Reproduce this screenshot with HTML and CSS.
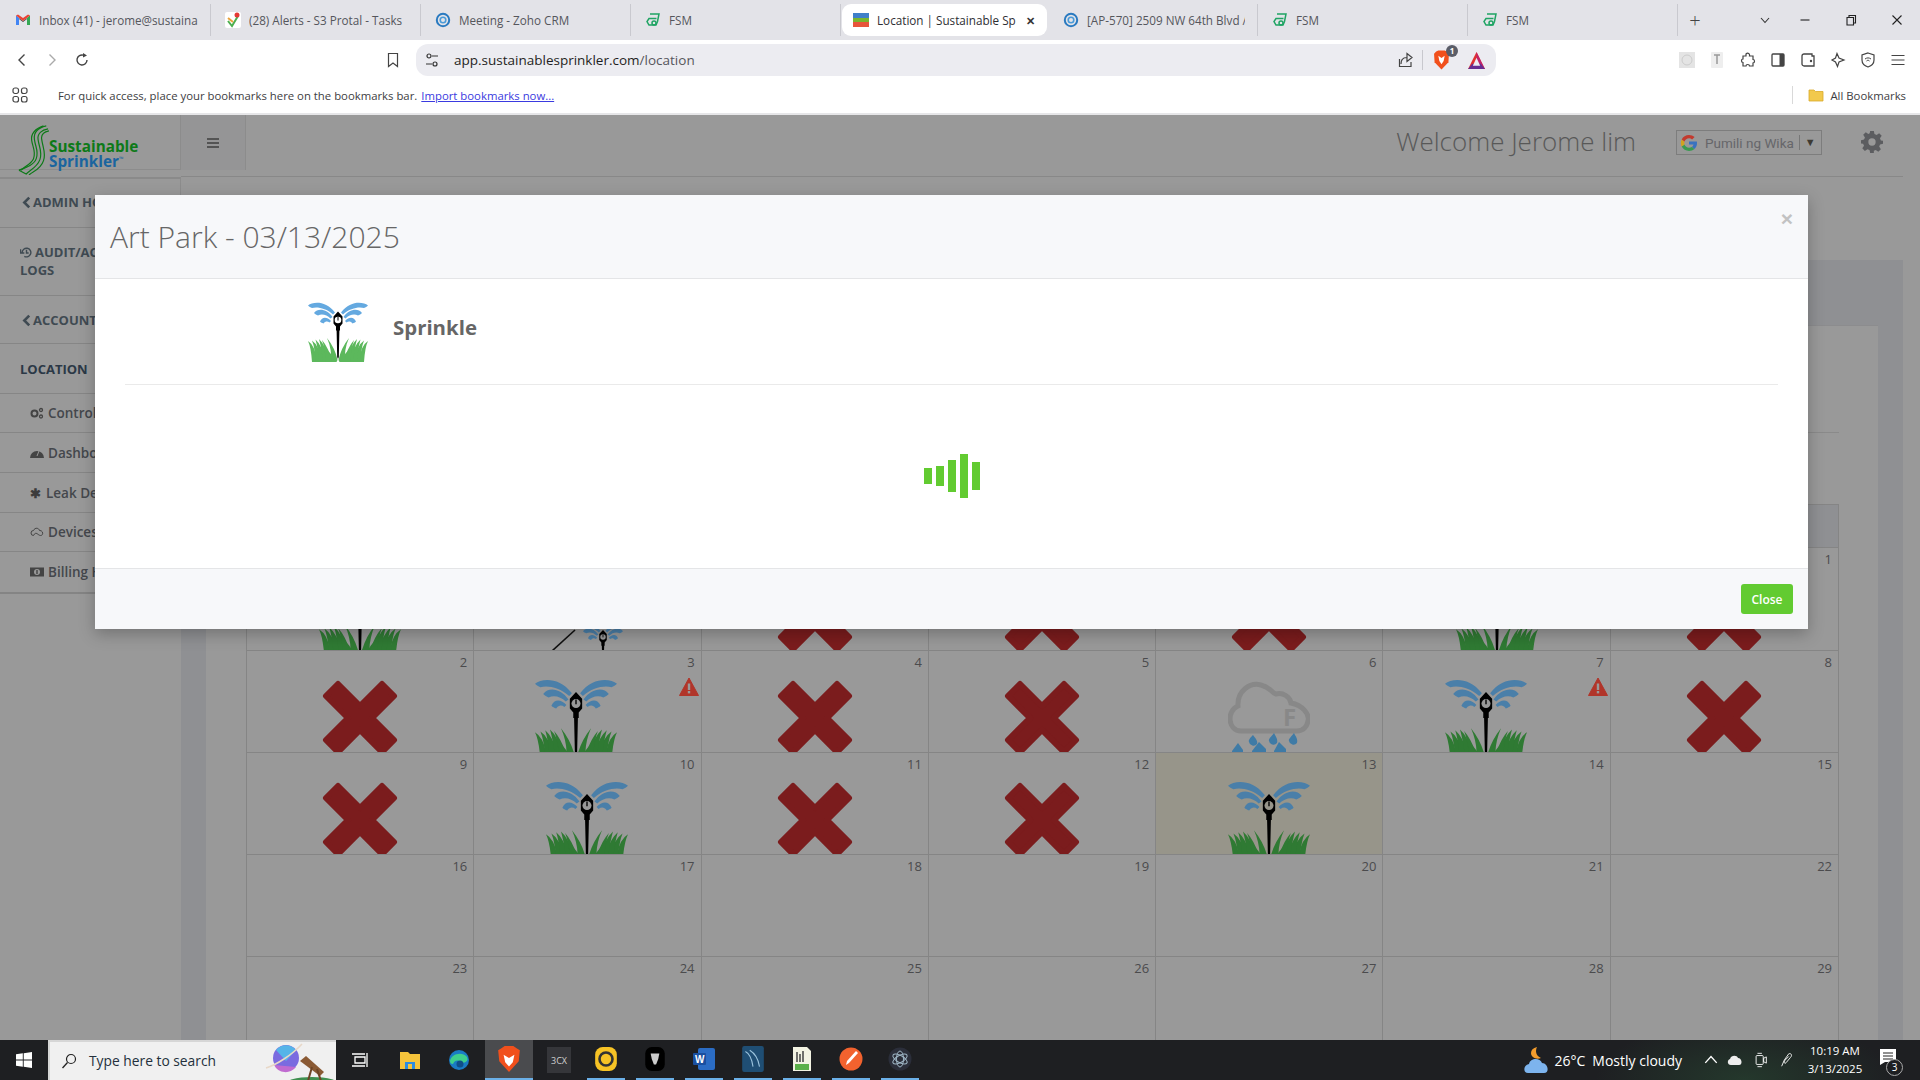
FILE: index.html
```html
<!DOCTYPE html>
<html lang="en">
<head>
<meta charset="utf-8">
<title>Location | Sustainable Sprinkler</title>
<link rel="stylesheet" href="styles.css">
</head>
<body>
<svg class="defs" width="0" height="0" aria-hidden="true">
  <symbol id="spr" viewBox="0 0 60 60">
    <g id="spr-half">
      <g class="spr-water">
        <path d="M0 3.500C5-.5 18-1.500 27 10.500L25 12.500C18 6 9 4.500 4 6C2.500 5.500 1 4.500 0 3.500Z"/>
        <path d="M6 11C10 5.500 19 7 24.500 15L22.500 16.500C19 13 14 11.500 10 13.500C8.500 13 7 12 6 11Z"/>
        <path d="M12 19.500C14 14.500 19 14.500 23 19L21.500 20.500C19.500 19 17.500 19 15.500 21.500C14 21 13 20.500 12 19.500Z"/>
      </g>
      <g class="spr-grass">
        <path d="M5 60Q6 50 12 46Q22 46 27 60Z"/>
        <path d="M4 60Q3 45 0 39Q8 44 8.500 60Z"/>
        <path d="M7.500 60Q7 46 4 38.500Q12 44 13 60Z"/>
        <path d="M11 60Q10 46 7.500 37.500Q15 44 17 60Z"/>
        <path d="M15 60Q13.500 46 11 37Q18.500 44 21 60Z"/>
        <path d="M18 60Q17 46 14 38Q21 46 24 60Z"/>
        <path d="M23 60Q24 47 19 36Q27 46 29.500 58L28.500 60Z"/>
      </g>
    </g>
    <use href="#spr-half" transform="matrix(-1 0 0 1 60 0)"/>
    <path d="M30 9.500L34.500 14.500V21.500L32 24.500V28.500H31.400L30.800 55L30 57L29.200 55L28.600 28.500H28V24.500L25.500 21.500V14.500Z" fill="#000"/>
    <circle cx="30" cy="18" r="3.300" fill="var(--spr-eye)"/>
    <path d="M30 15V18.500" stroke="#000" stroke-width="1"/>
  </symbol>
  <symbol id="xmark" viewBox="0 0 82 82">
    <path d="M7 17L19 5L41 27L63 5L75 17L53 39L75 61L63 73L41 51L19 73L7 61L29 39Z" fill="#7b1c1d" stroke="#7b1c1d" stroke-width="6" stroke-linejoin="round"/>
  </symbol>
  <symbol id="warn" viewBox="0 0 20 20">
    <path d="M10 1L19.500 18.500H0.500Z" fill="#b1352a" stroke="#b1352a" stroke-linejoin="round"/>
    <rect x="8.800" y="6.500" width="2.400" height="6.500" fill="#999"/>
    <rect x="8.800" y="14" width="2.400" height="2.400" fill="#999"/>
  </symbol>
  <symbol id="fsm" viewBox="0 0 16 16">
    <path d="M5 2H14L12.500 9.500L11 13H4L2 9.500L4 6.500H11.500" fill="none" stroke="#1fa463" stroke-width="1.500"/>
    <circle cx="9" cy="11" r="2" fill="none" stroke="#1fa463" stroke-width="1.500"/>
  </symbol>
  <symbol id="zoho" viewBox="0 0 16 16">
    <circle cx="8" cy="8" r="6.200" fill="none" stroke="#2a7ac0" stroke-width="2"/>
    <circle cx="8" cy="8" r="2.800" fill="none" stroke="#4a9bd8" stroke-width="1.600"/>
  </symbol>
</svg>

<header class="tabstrip">
  <div class="tab first"><svg class="fav" viewBox="0 0 16 16"><path d="M1 13V4L8 9L15 4V13H12V7L8 10L4 7V13Z" fill="#444"/><path d="M1 13V3.500L4 6V13Z" fill="#4285f4"/><path d="M15 13V3.500L12 6V13Z" fill="#34a853"/><path d="M1 3.500L8 9L15 3.500L13 2.500L8 6L3 2.500Z" fill="#ea4335"/></svg><span class="tab-title">Inbox (41) - jerome@sustainab</span></div>
  <div class="tab"><svg class="fav" viewBox="0 0 16 16"><rect width="16" height="16" rx="2" fill="#fff"/><path d="M3 9L7 14L13 4" fill="none" stroke="#4caf50" stroke-width="2"/><path d="M3 6L8 10" stroke="#e9a13b" stroke-width="2"/><circle cx="12" cy="3" r="2.500" fill="#e53935"/></svg><span class="tab-title">(28) Alerts - S3 Protal - Tasks</span></div>
  <div class="tab"><svg class="fav"><use href="#zoho"/></svg><span class="tab-title">Meeting - Zoho CRM</span></div>
  <div class="tab"><svg class="fav"><use href="#fsm"/></svg><span class="tab-title">FSM</span></div>
  <div class="tab active"><svg class="fav" viewBox="0 0 16 16"><rect y="1" width="16" height="5" fill="#3f7fc9"/><rect y="6" width="16" height="4" fill="#7ab52f"/><rect y="10" width="16" height="5" fill="#e8553a"/></svg><span class="tab-title">Location | Sustainable Spr</span><span class="tab-close">✕</span></div>
  <div class="tab after"><svg class="fav"><use href="#zoho"/></svg><span class="tab-title">[AP-570] 2509 NW 64th Blvd /</span></div>
  <div class="tab"><svg class="fav"><use href="#fsm"/></svg><span class="tab-title">FSM</span></div>
  <div class="tab"><svg class="fav"><use href="#fsm"/></svg><span class="tab-title">FSM</span></div>
  <div class="newtab">+</div>
  <div class="winctl">
    <svg class="wi chev" viewBox="0 0 12 12"><path d="M2 4L6 8.500L10 4" fill="none" stroke="#333" stroke-width="1.100"/></svg>
    <svg class="wi" viewBox="0 0 12 12"><path d="M1.500 6H10.500" stroke="#222" stroke-width="1.100"/></svg>
    <svg class="wi" viewBox="0 0 12 12"><path d="M2 3.500H8.500V11H2ZM4 3.500V1.500H10.500V9H8.500" fill="none" stroke="#222" stroke-width="1.100"/></svg>
    <svg class="wi" viewBox="0 0 12 12"><path d="M1.500 1.500L10.500 10.500M10.500 1.500L1.500 10.500" stroke="#222" stroke-width="1.100"/></svg>
  </div>
</header>

<div class="toolbar">
  <svg class="tb nav-back" viewBox="0 0 16 16"><path d="M10.500 2.500L5 8L10.500 13.500" fill="none" stroke="#444" stroke-width="1.400"/></svg>
  <svg class="tb nav-fwd" viewBox="0 0 16 16"><path d="M5.500 2.500L11 8L5.500 13.500" fill="none" stroke="#aaa" stroke-width="1.400"/></svg>
  <svg class="tb nav-reload" viewBox="0 0 16 16"><path d="M13 8A5 5 0 1 1 9.500 3.200" fill="none" stroke="#444" stroke-width="1.400"/><path d="M9 1V5.500L13 3.500Z" fill="#444"/></svg>
  <svg class="tb nav-mark" viewBox="0 0 16 16"><path d="M3.500 1.500H12.500V14.500L8 11L3.500 14.500Z" fill="none" stroke="#444" stroke-width="1.200"/></svg>
  <div class="omnibox">
    <svg class="tb tune" viewBox="0 0 16 16"><circle cx="5" cy="4" r="2" fill="none" stroke="#333" stroke-width="1.200"/><circle cx="11" cy="12" r="2" fill="none" stroke="#333" stroke-width="1.200"/><path d="M8 4H14M2 12H8" stroke="#333" stroke-width="1.200"/></svg>
    <div class="url">app.sustainablesprinkler.com<span class="url-path">/location</span></div>
    <svg class="tb share" viewBox="0 0 16 16"><path d="M9 5.500C4 5.500 3 9 3 12M9 1.500L14 5.500L9 9.500ZM1.500 7V14.500H13V10" fill="none" stroke="#444" stroke-width="1.200"/></svg>
    <span class="omni-sep"></span>
    <div class="brave-wrap">
      <svg class="brave" viewBox="0 0 16 18"><path d="M3 1L5 0H11L13 1L15 3L14.500 11L8 18L1.500 11L1 3Z" fill="#f1501c"/><path d="M5 5L8 7L11 5L10 10L8 13L6 10Z" fill="#fff"/></svg>
      <span class="brave-badge">1</span>
    </div>
    <svg class="rewards" viewBox="0 0 18 18"><path d="M9 1L17 17H1Z" fill="#e0322f"/><path d="M9 1L17 17H9Z" fill="#c2236b"/><path d="M1 17L5 12H13L17 17Z" fill="#662d91"/><path d="M9 6.500L12.500 14H5.500Z" fill="#ececf1"/></svg>
  </div>
  <div class="tb-right">
    <svg class="tb" viewBox="0 0 16 16"><rect width="16" height="16" fill="#e4e4e4"/><circle cx="8" cy="8" r="5" fill="none" stroke="#ccc"/></svg>
    <svg class="tb" viewBox="0 0 16 16"><rect x="2" width="12" height="16" rx="1" fill="#eee"/><path d="M5 3H11M8 3V12" stroke="#999" stroke-width="1.500"/></svg>
    <svg class="tb" viewBox="0 0 16 16"><path d="M6 2C8 0 10 2 9.500 4H13V7.500C15 7.500 15 11 13 11V14H9.500C9.500 12 6 12 6 14H3V10.500C1 10.500 1 7 3 7V4H6Z" fill="none" stroke="#444" stroke-width="1.200"/></svg>
    <svg class="tb" viewBox="0 0 16 16"><rect x="2" y="2" width="12" height="12" rx="1" fill="none" stroke="#444" stroke-width="1.300"/><rect x="9.500" y="2" width="4.500" height="12" fill="#444"/></svg>
    <svg class="tb" viewBox="0 0 16 16"><path d="M2 4C2 2.500 3 2 4 2H12V4H14V14H4C3 14 2 13 2 12Z" fill="none" stroke="#444" stroke-width="1.300"/><circle cx="11" cy="9" r="1.200" fill="#444"/></svg>
    <svg class="tb" viewBox="0 0 16 16"><path d="M7 1.500L9 6L14 8L9 10L7.500 14.500L5.500 10L2 8L5.500 6Z" fill="none" stroke="#444" stroke-width="1.200"/></svg>
    <svg class="tb" viewBox="0 0 16 16"><path d="M8 1L14 3V8C14 12 11 14 8 15C5 14 2 12 2 8V3Z" fill="none" stroke="#444" stroke-width="1.200"/><path d="M5 7C7 5.500 9 5.500 11 7M6.500 9C7.500 8 8.500 8 9.500 9" fill="none" stroke="#444"/></svg>
    <svg class="tb" viewBox="0 0 16 16"><path d="M1.500 3.500H14.500M1.500 8H14.500M1.500 12.500H14.500" stroke="#444" stroke-width="1.200"/></svg>
  </div>
</div>

<div class="bookbar">
  <svg class="apps" viewBox="0 0 16 16"><g fill="none" stroke="#444" stroke-width="1.200"><rect x="1" y="1" width="5.500" height="5.500" rx="2"/><rect x="9.500" y="1" width="5.500" height="5.500" rx="2"/><rect x="1" y="9.500" width="5.500" height="5.500" rx="2"/><rect x="9.500" y="9.500" width="5.500" height="5.500" rx="2"/></g></svg>
  <span class="book-msg">For quick access, place your bookmarks here on the bookmarks bar.</span>
  <a class="book-link">Import bookmarks now...</a>
  <span class="book-sep"></span>
  <svg class="folder" viewBox="0 0 16 16"><path d="M1 3H6L7.500 4.500H15V14H1Z" fill="#f2c94c" stroke="#d9a928" stroke-width=".8"/></svg>
  <span class="book-all">All Bookmarks</span>
</div>

<div class="page">
  <aside class="side">
    <div class="logo">
      <svg class="logo-mark" viewBox="0 0 34 52" preserveAspectRatio="none">
        <g fill="none" stroke="#0d7a18" stroke-width="1.300">
          <path d="M31 1C22 3 17 8 18 15C19 23 23 27 20 35C18 41 10 44 1 47"/>
          <path d="M28 1C19 4 14 9 15 16C16 23 20 28 17 35C15 40 8 43 3 47"/>
          <path d="M33 4C26 5 21 9 22 15C23 23 27 28 24 36C21 44 13 47 9 51L1 47"/>
          <path d="M34 6C29 7 25 10 26 15C27 23 31 29 28 37C25 46 17 48 12 52"/>
        </g>
      </svg>
      <div class="logo-text"><span class="logo-a">Sustainable</span><span class="logo-b">Sprinkler<sup class="tm">™</sup></span></div>
    </div>
    <nav class="nav">
      <div class="nav-item i1"><svg class="ni" viewBox="0 0 10 12"><path d="M7.500 1.500L3 6L7.500 10.500" fill="none" stroke="#3f4a52" stroke-width="2.400"/></svg>ADMIN HOME</div>
      <div class="nav-item tall"><svg class="ni wide" viewBox="0 0 12 12"><path d="M2 6A4 4 0 1 1 4 9.500M0.500 3V6.500H4M6 3.500V6.500H8" fill="none" stroke="#3f4a52" stroke-width="1.300"/></svg>AUDIT/ACTIVITY<br>LOGS</div>
      <div class="nav-item i3"><svg class="ni" viewBox="0 0 10 12"><path d="M7.500 1.500L3 6L7.500 10.500" fill="none" stroke="#3f4a52" stroke-width="2.400"/></svg>ACCOUNTS</div>
      <div class="nav-item current">LOCATION</div>
      <div class="nav-sub s1"><svg class="si" viewBox="0 0 14 12"><circle cx="4.500" cy="6.500" r="3" fill="none" stroke="#444" stroke-width="2"/><circle cx="11" cy="3" r="1.500" fill="none" stroke="#444" stroke-width="1.300"/><circle cx="11" cy="9.500" r="1.500" fill="none" stroke="#444" stroke-width="1.300"/></svg>Controllers</div>
      <div class="nav-sub"><svg class="si" viewBox="0 0 14 12"><path d="M0 11A7 7 0 1 1 14 11Z" fill="#444"/><path d="M7 9L9 4" stroke="#999"/></svg>Dashboard</div>
      <div class="nav-sub"><span class="si-glyph">✱</span>Leak Detection</div>
      <div class="nav-sub s1"><svg class="si" viewBox="0 0 14 12"><path d="M3.500 9.500A2.500 2.500 0 0 1 3.500 4.500C5 1 9 2 9.500 4.500C13 4 14 9.500 10.500 9.500C8 9.500 6 4.500 3.500 9.500Z" fill="none" stroke="#444"/></svg>Devices</div>
      <div class="nav-sub"><svg class="si" viewBox="0 0 14 12"><rect y="1.500" width="14" height="9" fill="#444"/><circle cx="7" cy="6" r="3" fill="#999"/><rect x="6.300" y="4" width="1.400" height="4" fill="#444"/></svg>Billing History</div>
    </nav>
  </aside>

  <main class="main">
    <div class="topbar">
      <div class="menu-btn"><svg class="burger" viewBox="0 0 12 10"><path d="M0 1H12M0 5H12M0 9H12" stroke="#3f3f3f" stroke-width="1.700"/></svg></div>
      <div class="welcome">Welcome Jerome lim</div>
      <div class="translate">
        <svg class="g" viewBox="0 0 18 18"><path d="M17 9.200C17 8.600 17 8 16.800 7.500H9V10.500H13.500C13.300 11.500 12.700 12.400 11.800 13L14.500 15C16 13.500 17 11.500 17 9.200Z" fill="#3a72c0"/><path d="M9 17C11.200 17 13 16.300 14.500 15L11.800 13C11 13.500 10.100 13.800 9 13.800C6.900 13.800 5.100 12.400 4.500 10.500L1.700 12.600C3 15.200 5.800 17 9 17Z" fill="#3a9a52"/><path d="M4.500 10.500C4.200 9.500 4.200 8.500 4.500 7.500L1.700 5.400C.6 7.400 .6 10.600 1.700 12.600Z" fill="#d1a320"/><path d="M9 4.200C10.200 4.200 11.300 4.600 12.100 5.400L14.600 3C13.100 1.700 11.200 1 9 1C5.800 1 3 2.800 1.700 5.400L4.500 7.500C5.100 5.600 6.900 4.200 9 4.200Z" fill="#c23a2e"/></svg>
        <span class="tr-text">Pumili ng Wika</span>
        <span class="tr-sep"></span>
        <span class="tr-arrow">▼</span>
      </div>
      <svg class="gear" viewBox="0 0 24 24"><path fill="#5c5d60" fill-rule="evenodd" d="M10 0H14L14.700 3.300L17 4.300L19.800 2.400L22.600 5.200L20.700 8L21.700 10.300L24 10.500V14L20.800 14.700L19.800 17L21.700 19.800L18.900 22.600L16.100 20.700L14 21.600L14 24H10L9.300 20.800L7 19.800L4.200 21.700L1.400 18.900L3.300 16.100L2.300 13.800L0 13.500V10L3.300 9.300L4.300 7L2.400 4.200L5.200 1.400L8 3.300L9.500 2.500ZM12 8A4 4 0 1 0 12 16A4 4 0 1 0 12 8Z"/></svg>
    </div>
    <section class="band">
      <div class="panel">
        <hr class="panel-rule">
        <div class="calendar">
          <div class="dow">Sun</div><div class="dow">Mon</div><div class="dow">Tue</div><div class="dow">Wed</div><div class="dow">Thu</div><div class="dow">Fri</div><div class="dow">Sat</div>

          <div class="cell first-row"><div class="num">&nbsp;</div><svg class="ico spr-dim"><use href="#spr"/></svg></div>
          <div class="cell first-row"><div class="num">&nbsp;</div>
            <svg class="ico spr-dim" viewBox="0 0 82 82"><path d="M6 75L29 54" stroke="#111" stroke-width="1.600"/><svg x="32" y="46" width="50" height="50" viewBox="0 0 60 60"><use href="#spr" width="60" height="60"/></svg></svg></div>
          <div class="cell first-row"><div class="num">&nbsp;</div><svg class="ico"><use href="#xmark"/></svg></div>
          <div class="cell first-row"><div class="num">&nbsp;</div><svg class="ico"><use href="#xmark"/></svg></div>
          <div class="cell first-row"><div class="num">&nbsp;</div><svg class="ico"><use href="#xmark"/></svg></div>
          <div class="cell first-row"><div class="num">&nbsp;</div><svg class="ico spr-dim"><use href="#spr"/></svg></div>
          <div class="cell first-row"><div class="num">1</div><svg class="ico"><use href="#xmark"/></svg></div>

          <div class="cell"><div class="num">2</div><svg class="ico"><use href="#xmark"/></svg></div>
          <div class="cell"><div class="num">3</div><svg class="warn"><use href="#warn"/></svg><svg class="ico spr-dim"><use href="#spr"/></svg></div>
          <div class="cell"><div class="num">4</div><svg class="ico"><use href="#xmark"/></svg></div>
          <div class="cell"><div class="num">5</div><svg class="ico"><use href="#xmark"/></svg></div>
          <div class="cell"><div class="num">6</div>
            <svg class="ico" viewBox="0 0 82 82"><path d="M13 52C0 52 -2 32 10 27C9 12 22 3 33 6C42 8 44 14 48 15C55 13 62 18 63 24C74 26 82 35 80 42C79 48 75 52 69 52Z" fill="none" stroke="#888" stroke-width="5" transform="translate(0 0)"/><text class="wx-f" x="55" y="47">F</text>
              <g fill="#3f7ba6"><path d="M25 56C28 60 30 62 29 65A4.500 4.500 0 0 1 21 63C20 61 23 58 25 56Z"/><path d="M46 54C48 58 50 60 49 64A4.500 4.500 0 0 1 41 62C40 60 44 57 46 54Z"/><path d="M66 54C68 58 70 60 69 64A4.500 4.500 0 0 1 61 62C60 60 64 57 66 54Z"/><path d="M10 64L15 71V76H4V72Z"/><path d="M31 63L38 70V76H24V72Z"/><path d="M51 63L58 70V76H46V72Z"/></g></svg></div>
          <div class="cell"><div class="num">7</div><svg class="warn"><use href="#warn"/></svg><svg class="ico spr-dim"><use href="#spr"/></svg></div>
          <div class="cell"><div class="num">8</div><svg class="ico"><use href="#xmark"/></svg></div>

          <div class="cell"><div class="num">9</div><svg class="ico"><use href="#xmark"/></svg></div>
          <div class="cell"><div class="num">10</div><svg class="ico spr-dim"><use href="#spr"/></svg></div>
          <div class="cell"><div class="num">11</div><svg class="ico"><use href="#xmark"/></svg></div>
          <div class="cell"><div class="num">12</div><svg class="ico"><use href="#xmark"/></svg></div>
          <div class="cell today"><div class="num">13</div><svg class="ico spr-dim"><use href="#spr"/></svg></div>
          <div class="cell"><div class="num">14</div></div>
          <div class="cell"><div class="num">15</div></div>

          <div class="cell"><div class="num">16</div></div>
          <div class="cell"><div class="num">17</div></div>
          <div class="cell"><div class="num">18</div></div>
          <div class="cell"><div class="num">19</div></div>
          <div class="cell"><div class="num">20</div></div>
          <div class="cell"><div class="num">21</div></div>
          <div class="cell"><div class="num">22</div></div>

          <div class="cell"><div class="num">23</div></div>
          <div class="cell"><div class="num">24</div></div>
          <div class="cell"><div class="num">25</div></div>
          <div class="cell"><div class="num">26</div></div>
          <div class="cell"><div class="num">27</div></div>
          <div class="cell"><div class="num">28</div></div>
          <div class="cell"><div class="num">29</div></div>
        </div>
      </div>
    </section>
  </main>

  <div class="modal">
    <div class="modal-head">
      <h1 class="modal-title">Art Park - 03/13/2025</h1>
      <span class="modal-x">×</span>
    </div>
    <div class="modal-body">
      <div class="sprinkle-row">
        <svg class="sprinkle-ico spr-lit"><use href="#spr"/></svg>
        <span class="sprinkle-label">Sprinkle</span>
      </div>
      <div class="loader">
        <span class="bar b1"></span><span class="bar b2"></span><span class="bar b3"></span><span class="bar b4"></span><span class="bar b5"></span>
      </div>
    </div>
    <div class="modal-foot"><button class="btn-close">Close</button></div>
  </div>
</div>

<footer class="taskbar">
  <div class="start"><svg class="win" viewBox="0 0 16 16"><path fill="#fff" d="M0 2.300L6.800 1.300V7.600H0ZM7.700 1.200L16 0V7.600H7.700ZM0 8.400H6.800V14.700L0 13.700ZM7.700 8.400H16V16L7.700 14.800Z"/></svg></div>
  <div class="search">
    <svg class="lens" viewBox="0 0 16 16"><circle cx="10" cy="6" r="4.500" fill="none" stroke="#222" stroke-width="1.200"/><path d="M6.500 9.500L1.500 15" stroke="#222" stroke-width="1.300"/></svg>
    <span class="search-text">Type here to search</span>
    <svg class="search-art" viewBox="0 0 74 40">
      <ellipse cx="50" cy="44" rx="28" ry="8" fill="#3f8f4f"/>
      <circle cx="24" cy="17" r="13" fill="#7a6be0"/><path d="M14 9A13 13 0 0 1 34 9L24 20Z" fill="#55b4e8"/><path d="M12 24A13 13 0 0 0 34 26Z" fill="#c06bd0"/>
      <path d="M4 27C14 24 30 14 40 3" stroke="#e8d8c8" stroke-width="1.500" fill="none"/>
      <path d="M38 20L44 15L62 31L58 35Z" fill="#8a5a34"/><path d="M50 26L46 40M55 28L59 40" stroke="#6e4526" stroke-width="2"/>
    </svg>
  </div>
  <svg class="tk taskview" viewBox="0 0 18 18"><path d="M1 3H14M1 15H14M4 6H14V12H4Z M16 2V16" fill="none" stroke="#fff" stroke-width="1.300"/></svg>
  <svg class="tk" viewBox="0 0 22 22"><path d="M1 3H9L11 5H21V20H1Z" fill="#f5c33b"/><rect x="6" y="13" width="10" height="7" fill="#2b8be0"/><rect x="9" y="15" width="4" height="5" fill="#f5c33b"/></svg>
  <svg class="tk" viewBox="0 0 22 22"><circle cx="11" cy="11" r="10" fill="#1a7bc4"/><path d="M2 12C3 5 14 2 19 8C21 12 17 14 13 14C12 11 7 10 5 15C3 15 2 14 2 12Z" fill="#3ecf8e"/><circle cx="12" cy="15" r="3.500" fill="#0f4f8a"/></svg>
  <div class="tk-active"><svg class="tk-in" viewBox="0 0 22 24"><path d="M4 2L7 0H15L18 2L21 4L20 14L11 24L2 14L1 4Z" fill="#f1501c"/><path d="M6 8L11 11L16 8L14.500 15L11 19L7.500 15Z" fill="#fff"/></svg></div>
  <div class="tk-box cx"><span>3CX</span></div>
  <div class="tk-run"><svg class="tk-in" viewBox="0 0 22 24"><rect x="1" y="1" width="20" height="22" rx="7" fill="#f7c325"/><circle cx="11" cy="12" r="6" fill="none" stroke="#333" stroke-width="2.400"/></svg></div>
  <div class="tk-run"><svg class="tk-in" viewBox="0 0 22 24"><rect x="2" y="1" width="18" height="22" rx="6" fill="#000"/><path d="M7 7H15L14 12L12 17H10L8 12Z" fill="#ccc"/></svg></div>
  <div class="tk-run"><svg class="tk-in" viewBox="0 0 24 24"><rect x="6" y="1" width="17" height="22" rx="2" fill="#2b6cc4"/><rect x="1" y="6" width="13" height="12" rx="1" fill="#1a4f9f"/><text class="word-w" x="3" y="16">W</text></svg></div>
  <div class="tk-run"><svg class="tk-in" viewBox="0 0 22 24"><rect x="1" y="0" width="20" height="24" rx="2" fill="#1f4e74"/><path d="M4 5C8 7 10 12 11 19M8 4C13 7 16 13 17 19" stroke="#9cc4de" fill="none"/></svg></div>
  <div class="tk-run"><svg class="tk-in" viewBox="0 0 22 26"><path d="M2 1H16L20 5V25H2Z" fill="#f3f3e3"/><rect x="4" y="18" width="14" height="6" fill="#5bb04a"/><path d="M6 6V16M9 8V16M12 5V16" stroke="#444" stroke-width="1.500"/></svg></div>
  <div class="tk-run"><svg class="tk-in" viewBox="0 0 24 24"><circle cx="12" cy="12" r="11.500" fill="#f2622e"/><path d="M17 4L19 6L10 16L7 18L8 14Z" fill="#fff"/></svg></div>
  <div class="tk-run"><svg class="tk-in" viewBox="0 0 24 24"><circle cx="12" cy="12" r="11.500" fill="#2b2e3a"/><g fill="none" stroke="#9fb6c6"><ellipse cx="12" cy="12" rx="8" ry="3.500" transform="rotate(30 12 12)"/><ellipse cx="12" cy="12" rx="8" ry="3.500" transform="rotate(90 12 12)"/><ellipse cx="12" cy="12" rx="8" ry="3.500" transform="rotate(150 12 12)"/></g></svg></div>
  <div class="tray">
    <svg class="tr-weather" viewBox="0 0 26 28"><path d="M13 1C11 5 12 10 17 12C12 14 7 11 7 7C7 4 9 2 13 1Z" fill="#f39c2d"/><path d="M4 27C-1 27 -1 19 5 18C6 12 16 11 18 17C24 17 26 27 20 27Z" fill="#7db4ee"/></svg>
    <span class="tr-temp">26°C</span>
    <span class="tr-desc">Mostly cloudy</span>
    <svg class="tr-ic caret" viewBox="0 0 14 14"><path d="M2 9.500L7 4L12 9.500" fill="none" stroke="#fff" stroke-width="1.200"/></svg>
    <svg class="tr-ic after-caret" viewBox="0 0 16 14"><path d="M4 12C0 12 0 7 3 6C4 2 10 2 11 5C15 5 16 12 12 12Z" fill="#eee"/></svg>
    <svg class="tr-ic" viewBox="0 0 14 18"><rect x="1.500" y="4" width="8" height="10" rx="1" fill="none" stroke="#fff"/><path d="M10 7L13 5.500V12.500L10 11ZM3 1.500H8M3 16.500H8" fill="none" stroke="#fff"/></svg>
    <svg class="tr-ic" viewBox="0 0 16 18"><path d="M2 16L5 9L10 2C13 1 14 4 12 6L7 12C5 14 4 11 6 9L10 5" fill="none" stroke="#fff"/></svg>
    <div class="clock"><span>10:19 AM</span><span>3/13/2025</span></div>
    <div class="notif">
      <svg class="notif-ic" viewBox="0 0 16 16"><path d="M0 0H16V13H5L0 16Z" fill="#fff"/><path d="M3 4H13M3 7H13M3 10H13" stroke="#222"/></svg>
      <span class="notif-badge">3</span>
    </div>
  </div>
</footer>
</body>
</html>
```

FILE: styles.css
```css
* { box-sizing: border-box; }
html, body { margin: 0; height: 100%; overflow: hidden; }
body { width: 1920px; height: 1080px; display: flex; flex-direction: column; font-family: "Open Sans", sans-serif; background: #999; }
.defs { display: block; height: 0; }

/* browser chrome */
.tabstrip { height: 40px; background: #e3e3e8; display: flex; align-items: center; padding-left: 5px; flex: none; }
.tab { width: 210px; height: 32px; padding: 0 12px 0 14px; display: flex; align-items: center; gap: 8px; border-right: 1px solid #c9c9cf; font-size: 11.700px; color: #55565c; }
.tab.first { width: 206px; padding-left: 10px; }
.tab .fav { width: 16px; height: 16px; flex: none; }
.tab-title { white-space: nowrap; overflow: hidden; flex: 1; }
.tab.active { width: 205px; margin-left: 1px; background: #fff; border-radius: 9px; border: 0; color: #2e2e33; padding-left: 11px; }
.tab.after { width: 205px; margin-left: 6px; padding-left: 10px; }
.tab-close { font-size: 11px; font-weight: 700; margin-left: 2px; color: #333; }
.newtab { width: 34px; font-size: 20px; font-weight: 300; color: #444; text-align: center; }
.winctl { margin-left: auto; display: flex; padding-right: 17px; gap: 34px; align-items: center; }
.wi { width: 12px; height: 12px; }
.chev { margin-right: -6px; }
.toolbar { height: 40px; background: #fff; display: flex; align-items: center; flex: none; }
.tb { width: 16px; height: 16px; flex: none; }
.nav-back { margin-left: 14px; }
.nav-fwd { margin-left: 14px; }
.nav-reload { margin-left: 14px; }
.nav-mark { margin-left: 295px; }
.omnibox { margin-left: 15px; width: 1080px; height: 32px; border-radius: 12px; background: #ececf1; display: flex; align-items: center; padding: 0 10px 0 8px; }
.url { margin-left: 14px; font-size: 13.500px; color: #1f1f22; flex: 1; white-space: nowrap; }
.url-path { color: #56565c; }
.omni-sep { width: 1px; height: 20px; background: #c8c8ce; margin: 0 10px 0 8px; }
.brave-wrap { width: 24px; height: 22px; position: relative; }
.brave { width: 17px; height: 20px; display: block; margin-top: 1px; }
.brave-badge { position: absolute; right: -1px; top: -4px; width: 12px; height: 12px; border-radius: 50%; background: #5a5d68; color: #fff; font-size: 8px; font-weight: 700; line-height: 12px; text-align: center; }
.rewards { width: 19px; height: 19px; margin-left: 10px; }
.tb-right { margin-left: auto; display: flex; gap: 14.100px; padding-right: 14px; }
.bookbar { height: 35px; padding-bottom: 3px; background: #fff; border-bottom: 2px solid #e6e6e8; display: flex; align-items: center; flex: none; font-size: 11.350px; color: #3d3d42; }
.apps { width: 16px; height: 16px; margin-left: 12px; }
.book-msg { margin-left: 30px; white-space: nowrap; }
.book-link { margin-left: 4px; color: #3a3ae0; text-decoration: underline; white-space: nowrap; }
.book-sep { width: 1px; height: 18px; background: #d9d9d9; margin-left: auto; }
.folder { width: 16px; height: 16px; margin-left: 15px; }
.book-all { margin-left: 6px; margin-right: 14px; white-space: nowrap; }

/* page under the dialog */
.page { flex: 1; min-height: 0; display: flex; position: relative; overflow: hidden; background: #999; }
.side { width: 181px; flex: none; }
.logo { height: 55px; border-bottom: 1px solid #8c8c8c; border-right: 1px solid #8c8c8c; display: flex; padding: 10px 0 0 18px; }
.logo-mark { width: 31px; height: 50px; flex: none; }
.logo-text { display: flex; flex-direction: column; margin-left: 0; padding-top: 14px; font-weight: 700; line-height: 14.500px; }
.logo-a { color: #0d7a18; font-size: 15.300px; }
.logo-b { color: #1a659f; font-size: 15.300px; }
.tm { font-size: 6px; line-height: 0; vertical-align: 6px; }
.nav { margin-top: 7px; border-top: 2px solid #8a8a8a; border-bottom: 2px solid #848484; border-right: 1px solid #8c8c8c; }
.nav-item { height: 50px; padding: 15px 0 0 20px; font-size: 13px; font-weight: 700; color: #3f4a52; border-bottom: 1px solid #868686; line-height: 18px; white-space: nowrap; }
.nav-item.i1 { height: 49px; padding-top: 14px; }
.nav-item.tall { height: 68px; }
.nav-item.i3 { height: 48px; }
.nav-item.current { color: #2b3846; padding-top: 16px; }
.ni { width: 13px; height: 13px; vertical-align: -2px; }
.ni.wide { margin-right: 2px; }
.nav-sub { height: 40px; padding: 0 0 0 30px; display: flex; align-items: center; gap: 4px; font-size: 13.500px; font-weight: 600; color: #44474c; border-bottom: 1px solid #868686; white-space: nowrap; }
.nav-sub.s1 { height: 39px; }
.nav-sub:last-child { border-bottom: 0; }
.si { width: 14px; height: 12px; flex: none; }
.si-glyph { font-size: 13px; width: 12px; color: #3c3c3c; }
.main { flex: 1; min-width: 0; display: flex; flex-direction: column; }
.topbar { height: 62px; margin-right: 17px; border-bottom: 1px solid #888; display: flex; flex: none; align-items: flex-start; }
.menu-btn { width: 65px; height: 55px; background: #959596; border-right: 1px solid #8c8c8c; display: flex; align-items: center; justify-content: center; flex: none; }
.burger { width: 12px; height: 10px; }
.welcome { margin-left: auto; margin-top: 8px; font-size: 26px; font-weight: 300; color: #585858; white-space: nowrap; line-height: 36px; }
.translate { margin: 15px 0 0 40px; width: 146px; height: 25px; border: 1px solid #7d7d7d; display: flex; align-items: center; padding-left: 3px; font-family: Roboto, sans-serif; font-size: 13.500px; color: #66666a; flex: none; }
.g { width: 18px; height: 18px; flex: none; }
.tr-text { margin-left: 7px; white-space: nowrap; }
.tr-sep { width: 1px; height: 15px; background: #777; margin: 0 5px; }
.tr-arrow { font-size: 11px; color: #3d3a33; }
.gear { width: 22px; height: 22px; margin: 16px 20px 0 39px; flex: none; }
.band { flex: 1; min-height: 0; margin: 83px 17px 0 0; padding: 65px 25px 0; background: #8f9093; }
.panel { height: 100%; background: #999; border-top: 1px solid #8c8c8e; padding: 0 39px 0 40px; }
.panel-rule { height: 1px; border: 0; background: #8a8a8a; margin: 106px 0 0; }
.calendar { margin-top: 71px; display: grid; grid-template-columns: repeat(7, 1fr); grid-template-rows: 43px 103px repeat(4, 102px); border-left: 1px solid #858585; border-top: 1px solid #858585; border-right: 1px solid #858585; width: 1593px; }
.dow { background: #8f9093; border-bottom: 1px solid #858585; border-right: 1px solid #858585; color: #444; font-size: 13px; font-weight: 700; text-align: center; padding-top: 10px; }
.dow:nth-child(7) { border-right: 0; }
.cell { height: 100%; overflow: hidden; text-align: center; border-right: 1px solid #858585; border-bottom: 1px solid #858585; }
.cell:nth-child(7n) { border-right: 0; }
.cell.today { background: #97958a; }
.num { height: 28px; padding: 1px 6px 0 0; text-align: right; font-size: 13px; line-height: 20px; color: #4b4b4d; }
.ico { display: inline-block; width: 82px; height: 82px; vertical-align: top; overflow: hidden; }
.warn { float: right; width: 20px; height: 20px; margin: -2px 2px 0 0; }
.spr-dim { --spr-water: #4a7fa9; --spr-grass: #2f7a33; --spr-eye: #999; }
.spr-lit { --spr-water: #64a9e0; --spr-grass: #5cb85c; --spr-eye: #fff; }
.spr-water { fill: var(--spr-water); }
.spr-grass { fill: var(--spr-grass); }
.today .spr-dim { --spr-eye: #97958a; }
.wx-f { font-family: "Open Sans", sans-serif; font-weight: 700; font-size: 24px; fill: #888; }

/* dialog */
.modal { position: absolute; left: 95px; top: 80px; width: 1713px; height: 434px; background: #fff; box-shadow: 0 5px 15px rgba(0, 0, 0, .25); display: flex; flex-direction: column; z-index: 5; }
.modal-head { height: 84px; flex: none; background: #f7f8fa; border-bottom: 1px solid #e4e5e7; padding: 0 15px; display: flex; align-items: center; position: relative; }
.modal-title { margin: 0; font-size: 30px; font-weight: 300; color: #666; line-height: 42px; }
.modal-x { position: absolute; right: 15px; top: 12px; font-family: "Liberation Sans", sans-serif; font-size: 21px; font-weight: 700; line-height: 24px; color: #c2c2c2; }
.modal-body { flex: 1; min-height: 0; padding: 23px 30px 0; }
.sprinkle-row { height: 83px; padding-left: 183px; border-bottom: 1px solid #eaeaea; display: flex; align-items: flex-start; gap: 25px; }
.sprinkle-ico { width: 60px; height: 60px; flex: none; }
.sprinkle-label { font-size: 20.400px; font-weight: 700; color: #666; line-height: 46px; margin-top: 2px; }
.loader { height: 183px; padding-bottom: 2px; display: flex; align-items: center; justify-content: center; gap: 4px; }
.bar { width: 8px; background: #62cb31; }
.b1 { height: 16px; }
.b2 { height: 20px; }
.b3 { height: 32px; }
.b4 { height: 44px; }
.b5 { height: 28px; }
.modal-foot { height: 61px; flex: none; background: #f7f8fa; border-top: 1px solid #e4e5e7; padding: 15px; display: flex; justify-content: flex-end; align-items: flex-start; }
.btn-close { width: 52px; height: 30px; border: 0; border-radius: 3px; background: #62cb31; color: #fff; font-family: "Open Sans", sans-serif; font-size: 12px; font-weight: 600; padding: 0; }

/* taskbar */
.taskbar { height: 40px; flex: none; display: flex; align-items: center; background: radial-gradient(ellipse 150px 60px at 1745px 100%, #24382c, transparent), #1e1f22; color: #fff; }
.start { width: 48px; display: flex; justify-content: center; flex: none; }
.win { width: 16px; height: 16px; }
.search { width: 288px; height: 40px; background: #f0f0f0; border: 2px solid #d6d6d6; border-bottom: 0; border-right: 0; display: flex; align-items: center; flex: none; position: relative; overflow: hidden; padding-left: 11px; }
.lens { width: 16px; height: 18px; flex: none; }
.search-text { margin: 0 0 2px 12px; font-size: 13.800px; color: #24303c; white-space: nowrap; }
.search-art { width: 74px; height: 40px; margin-left: auto; flex: none; }
.tk { width: 22px; height: 22px; margin-right: 27px; flex: none; }
.taskview { width: 18px; height: 18px; margin-left: 15px; margin-right: 30px; }
.tk-active { width: 48px; height: 40px; margin-left: -12px; background: #4a4b4e; border-bottom: 2px solid #6bb0e8; display: flex; align-items: center; justify-content: center; flex: none; }
.tk-in { width: 24px; height: 26px; }
.tk-box { width: 24px; height: 26px; margin: 0 16px 0 14px; background: #35363a; font-size: 9px; display: flex; align-items: center; justify-content: center; flex: none; color: #d0d0d0; }
.tk-run { width: 38px; height: 40px; margin-right: 11px; border-bottom: 2px solid #6bb0e8; display: flex; align-items: center; justify-content: center; flex: none; }
.word-w { font-family: "Liberation Sans", sans-serif; font-weight: 700; font-size: 10px; fill: #fff; }
.tray { margin-left: auto; padding-right: 15px; display: flex; align-items: center; flex: none; }
.tr-weather { width: 26px; height: 28px; }
.tr-temp { margin-left: 4px; font-size: 14px; white-space: nowrap; }
.tr-desc { margin-left: 7px; font-size: 14px; white-space: nowrap; }
.tr-ic { width: 16px; height: 16px; margin-left: 10px; }
.caret { margin-left: 21px; }
.after-caret { margin-left: 8px; }
.clock { margin-left: 13px; display: flex; flex-direction: column; align-items: center; font-size: 11.500px; line-height: 18px; white-space: nowrap; width: 54px; }
.notif { width: 40px; height: 40px; margin-left: 3px; position: relative; display: flex; align-items: center; justify-content: center; }
.notif-ic { width: 16px; height: 16px; margin: -6px 0 0 6px; }
.notif-badge { position: absolute; right: 2px; top: 19px; width: 17px; height: 17px; border: 1px solid #aaa; border-radius: 50%; background: #1e1f22; font-size: 10px; line-height: 15px; text-align: center; }
```
